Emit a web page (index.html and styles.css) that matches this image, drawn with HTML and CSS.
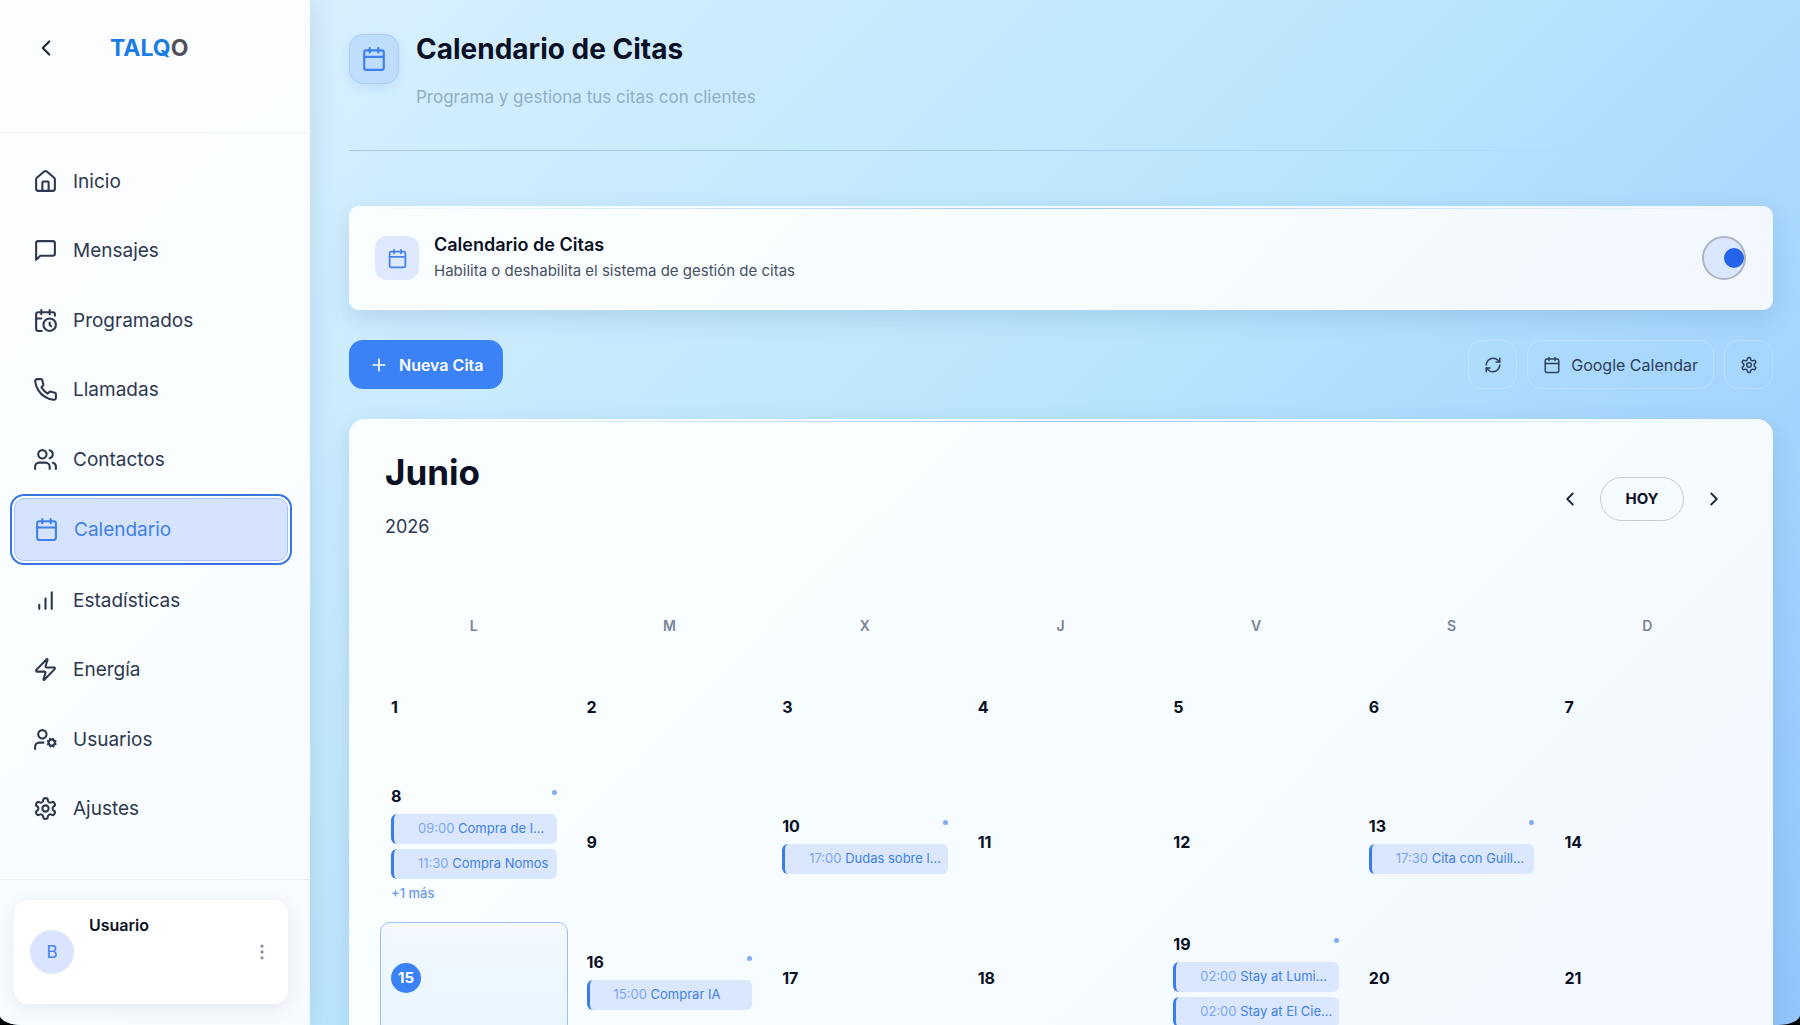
FILE: index.html
```html
<!DOCTYPE html>
<html lang="es">
<head>
  <meta charset="UTF-8" />
  <meta name="viewport" content="width=device-width, initial-scale=1.0" />
  <title>Calendario de Citas</title>
  <link rel="stylesheet" href="styles.css">
</head>
<body>
  <!-- icon sprite -->
  <svg class="sprite" aria-hidden="true">
    <symbol id="i-left" viewBox="0 0 24 24"><path d="m15 18-6-6 6-6"/></symbol>
    <symbol id="i-right" viewBox="0 0 24 24"><path d="m9 18 6-6-6-6"/></symbol>
    <symbol id="i-plus" viewBox="0 0 24 24"><path d="M5 12h14M12 5v14"/></symbol>
    <symbol id="i-home" viewBox="0 0 24 24"><path d="M15 21v-8a1 1 0 0 0-1-1h-4a1 1 0 0 0-1 1v8"/><path d="M3 10a2 2 0 0 1 .709-1.528l7-6a2 2 0 0 1 2.582 0l7 6A2 2 0 0 1 21 10v9a2 2 0 0 1-2 2H5a2 2 0 0 1-2-2z"/></symbol>
    <symbol id="i-message" viewBox="0 0 24 24"><path d="M21 15a2 2 0 0 1-2 2H7l-4 4V5a2 2 0 0 1 2-2h14a2 2 0 0 1 2 2z"/></symbol>
    <symbol id="i-clock" viewBox="0 0 24 24"><path d="M21 7.500V6a2 2 0 0 0-2-2H5a2 2 0 0 0-2 2v14a2 2 0 0 0 2 2h3.500"/><path d="M16 2v4M8 2v4M3 10h5M17.500 17.500 16 16.300V14"/><circle cx="16" cy="16" r="6"/></symbol>
    <symbol id="i-phone" viewBox="0 0 24 24"><path d="M22 16.920v3a2 2 0 0 1-2.180 2 19.790 19.790 0 0 1-8.630-3.070 19.500 19.500 0 0 1-6-6 19.790 19.790 0 0 1-3.070-8.670A2 2 0 0 1 4.110 2h3a2 2 0 0 1 2 1.720 12.840 12.840 0 0 0 .7 2.810 2 2 0 0 1-.45 2.110L8.090 9.910a16 16 0 0 0 6 6l1.270-1.270a2 2 0 0 1 2.110-.45 12.840 12.840 0 0 0 2.810.7A2 2 0 0 1 22 16.920z"/></symbol>
    <symbol id="i-users" viewBox="0 0 24 24"><path d="M16 21v-2a4 4 0 0 0-4-4H6a4 4 0 0 0-4 4v2"/><circle cx="9" cy="7" r="4"/><path d="M22 21v-2a4 4 0 0 0-3-3.870M16 3.130a4 4 0 0 1 0 7.750"/></symbol>
    <symbol id="i-calendar" viewBox="0 0 24 24"><path d="M8 2v4M16 2v4M3 10h18"/><rect width="18" height="18" x="3" y="4" rx="2"/></symbol>
    <symbol id="i-chart" viewBox="0 0 24 24"><path d="M12 20V10M18 20V4M6 20v-4"/></symbol>
    <symbol id="i-zap" viewBox="0 0 24 24"><path d="M4 14a1 1 0 0 1-.78-1.630l9.900-10.200a.5.5 0 0 1 .86.460l-1.920 6.020A1 1 0 0 0 13 10h7a1 1 0 0 1 .78 1.630l-9.900 10.200a.5.5 0 0 1-.86-.460l1.920-6.020A1 1 0 0 0 11 14z"/></symbol>
    <symbol id="i-user-cog" viewBox="0 0 24 24"><circle cx="9" cy="7" r="4"/><path d="M10 15H6a4 4 0 0 0-4 4v2"/><circle cx="18" cy="15" r="3"/><path d="m21.700 16.400-.9-.3M15.200 13.900l-.9-.3M16.600 18.700l.3-.9M19.100 12.200l.3-.9M19.600 18.700l-.4-1M16.800 12.300l-.4-1M14.300 16.600l1-.4M20.700 13.800l1-.4"/></symbol>
    <symbol id="i-gear" viewBox="0 0 24 24"><path d="M12.220 2h-.44a2 2 0 0 0-2 2v.18a2 2 0 0 1-1 1.730l-.43.25a2 2 0 0 1-2 0l-.15-.08a2 2 0 0 0-2.730.730l-.22.380a2 2 0 0 0 .730 2.730l.150.100a2 2 0 0 1 1 1.720v.510a2 2 0 0 1-1 1.740l-.150.090a2 2 0 0 0-.730 2.730l.220.380a2 2 0 0 0 2.730.730l.150-.080a2 2 0 0 1 2 0l.430.250a2 2 0 0 1 1 1.730V20a2 2 0 0 0 2 2h.440a2 2 0 0 0 2-2v-.180a2 2 0 0 1 1-1.730l.430-.250a2 2 0 0 1 2 0l.150.080a2 2 0 0 0 2.730-.730l.220-.390a2 2 0 0 0-.730-2.730l-.150-.080a2 2 0 0 1-1-1.740v-.500a2 2 0 0 1 1-1.740l.150-.090a2 2 0 0 0 .730-2.730l-.220-.380a2 2 0 0 0-2.730-.730l-.150.080a2 2 0 0 1-2 0l-.430-.250a2 2 0 0 1-1-1.730V4a2 2 0 0 0-2-2z"/><circle cx="12" cy="12" r="3"/></symbol>
    <symbol id="i-refresh" viewBox="0 0 24 24"><path d="M3 12a9 9 0 0 1 9-9 9.750 9.750 0 0 1 6.740 2.740L21 8"/><path d="M21 3v5h-5M21 12a9 9 0 0 1-9 9 9.750 9.750 0 0 1-6.740-2.740L3 16"/><path d="M8 16H3v5"/></symbol>
    <symbol id="i-dots" viewBox="0 0 24 24"><circle cx="12" cy="12" r="1"/><circle cx="12" cy="5" r="1"/><circle cx="12" cy="19" r="1"/></symbol>
  </svg>

  <div class="app">
    <aside class="sidebar">
      <div class="brand">
        <button class="icon-btn" aria-label="Contraer menú"><svg class="icon"><use href="#i-left"/></svg></button>
        <a class="logo" href="#">TALQ<span>O</span></a>
      </div>

      <nav class="menu">
        <a href="#"><svg class="icon"><use href="#i-home"/></svg>Inicio</a>
        <a href="#"><svg class="icon"><use href="#i-message"/></svg>Mensajes</a>
        <a href="#"><svg class="icon"><use href="#i-clock"/></svg>Programados</a>
        <a href="#"><svg class="icon"><use href="#i-phone"/></svg>Llamadas</a>
        <a href="#"><svg class="icon"><use href="#i-users"/></svg>Contactos</a>
        <a href="#" class="active" aria-current="page"><svg class="icon"><use href="#i-calendar"/></svg>Calendario</a>
        <a href="#"><svg class="icon"><use href="#i-chart"/></svg>Estadísticas</a>
        <a href="#"><svg class="icon"><use href="#i-zap"/></svg>Energía</a>
        <a href="#"><svg class="icon"><use href="#i-user-cog"/></svg>Usuarios</a>
        <a href="#"><svg class="icon"><use href="#i-gear"/></svg>Ajustes</a>
      </nav>

      <div class="sidebar-footer">
        <div class="user-card">
          <span class="avatar">B</span>
          <span class="user-name">Usuario</span>
          <button class="icon-btn more" aria-label="Opciones de usuario"><svg class="icon"><use href="#i-dots"/></svg></button>
        </div>
      </div>
    </aside>

    <main class="content">
      <header class="page-header">
        <span class="header-icon"><svg class="icon"><use href="#i-calendar"/></svg></span>
        <div>
          <h1>Calendario de Citas</h1>
          <p>Programa y gestiona tus citas con clientes</p>
        </div>
      </header>

      <section class="card toggle-card">
        <span class="card-icon"><svg class="icon"><use href="#i-calendar"/></svg></span>
        <label for="enable-calendar">
          <strong>Calendario de Citas</strong>
          <span>Habilita o deshabilita el sistema de gestión de citas</span>
        </label>
        <input type="checkbox" class="switch" id="enable-calendar" checked />
      </section>

      <div class="toolbar">
        <button class="btn-primary"><svg class="icon"><use href="#i-plus"/></svg>Nueva Cita</button>
        <div class="tools">
          <button class="btn-glass square" aria-label="Actualizar"><svg class="icon"><use href="#i-refresh"/></svg></button>
          <button class="btn-glass"><svg class="icon"><use href="#i-calendar"/></svg>Google Calendar</button>
          <button class="btn-glass square" aria-label="Configuración"><svg class="icon"><use href="#i-gear"/></svg></button>
        </div>
      </div>

      <section class="card calendar">
        <div class="calendar-header">
          <div>
            <h2>Junio</h2>
            <p>2026</p>
          </div>
          <div class="month-nav">
            <button class="icon-btn" aria-label="Mes anterior"><svg class="icon"><use href="#i-left"/></svg></button>
            <button class="today-btn">HOY</button>
            <button class="icon-btn" aria-label="Mes siguiente"><svg class="icon"><use href="#i-right"/></svg></button>
          </div>
        </div>

        <table class="month">
          <thead>
            <tr><th>L</th><th>M</th><th>X</th><th>J</th><th>V</th><th>S</th><th>D</th></tr>
          </thead>
          <tbody>
            <tr>
              <td><span class="num">1</span></td>
              <td><span class="num">2</span></td>
              <td><span class="num">3</span></td>
              <td><span class="num">4</span></td>
              <td><span class="num">5</span></td>
              <td><span class="num">6</span></td>
              <td><span class="num">7</span></td>
            </tr>
            <tr class="busy">
              <td>
                <div class="day-top"><span class="num">8</span><i class="dot"></i></div>
                <a class="event" href="#"><time>09:00</time> Compra de l...</a>
                <a class="event" href="#"><time>11:30</time> Compra Nomos</a>
                <a class="more-events" href="#">+1 más</a>
              </td>
              <td><span class="num">9</span></td>
              <td>
                <div class="day-top"><span class="num">10</span><i class="dot"></i></div>
                <a class="event" href="#"><time>17:00</time> Dudas sobre l...</a>
              </td>
              <td><span class="num">11</span></td>
              <td><span class="num">12</span></td>
              <td>
                <div class="day-top"><span class="num">13</span><i class="dot"></i></div>
                <a class="event" href="#"><time>17:30</time> Cita con Guill...</a>
              </td>
              <td><span class="num">14</span></td>
            </tr>
            <tr>
              <td class="today"><span class="num">15</span></td>
              <td>
                <div class="day-top"><span class="num">16</span><i class="dot"></i></div>
                <a class="event" href="#"><time>15:00</time> Comprar IA</a>
              </td>
              <td><span class="num">17</span></td>
              <td><span class="num">18</span></td>
              <td>
                <div class="day-top"><span class="num">19</span><i class="dot"></i></div>
                <a class="event" href="#"><time>02:00</time> Stay at Lumi...</a>
                <a class="event" href="#"><time>02:00</time> Stay at El Cie...</a>
              </td>
              <td><span class="num">20</span></td>
              <td><span class="num">21</span></td>
            </tr>
          </tbody>
        </table>
      </section>
    </main>
  </div>
</body>
</html>
```
FILE: styles.css
```css
* {
  box-sizing: border-box;
}

body {
  margin: 0;
  background: #000;
  font-family: Inter, "Open Sans", sans-serif;
  color: #0b1024;
}

h1, h2, p {
  margin: 0;
}

a {
  color: inherit;
  text-decoration: none;
}

button {
  font-family: inherit;
  border: none;
  background: none;
  padding: 0;
  cursor: pointer;
}

.sprite {
  display: none;
}

.icon {
  width: 18px;
  height: 18px;
  flex: none;
  display: block;
  fill: none;
  stroke: currentColor;
  stroke-width: 2;
  stroke-linecap: round;
  stroke-linejoin: round;
}

.icon-btn {
  display: flex;
  align-items: center;
  justify-content: center;
  width: 44px;
  height: 44px;
  color: #1e293b;
}

.app {
  display: flex;
  height: 100vh;
  overflow: hidden;
  background: linear-gradient(135deg, #e0f2fe 0%, #bae6fd 50%, #93c5fd 100%);
  border-radius: 0 0 22px 22px / 0 0 10px 10px;
}

/* Sidebar */
.sidebar {
  width: 310px;
  flex: none;
  display: flex;
  flex-direction: column;
  background: linear-gradient(135deg, #fcfdff 0%, #fafeff 50%, #f7faff 100%);
  box-shadow: 4px 0 24px rgba(30, 80, 140, 0.12);
}

.brand {
  display: flex;
  align-items: flex-start;
  gap: 42px;
  height: 133px;
  padding: 26px 24px;
  border-bottom: 1px solid #eef4f9;
}

.brand .icon {
  width: 26px;
  height: 26px;
}

.logo {
  font-size: 23px;
  font-weight: 700;
  line-height: 44px;
  color: #1a7ce6;
}

.logo span {
  color: #505157;
}

.menu {
  flex: 1;
  display: flex;
  flex-direction: column;
  justify-content: space-between;
  padding: 18px 22px 40px 14px;
}

.menu a {
  display: flex;
  align-items: center;
  gap: 15px;
  height: 61px;
  padding: 0 19px;
  border-radius: 10px;
  font-size: 19px;
  color: #2d3850;
}

.menu .icon {
  width: 25px;
  height: 25px;
}

.menu .active {
  height: 63px;
  color: #3f80ea;
  background: #d5e3fe;
  border: 1px solid #a5c3f9;
  outline: 2px solid #3775e2;
  outline-offset: 2px;
}

.sidebar-footer {
  padding: 20px 22px 21px 14px;
  border-top: 1px solid #e8f0f6;
}

.user-card {
  display: flex;
  align-items: center;
  gap: 15px;
  height: 104px;
  padding: 16px 4px 16px 16px;
  background: #fff;
  border-radius: 14px;
  box-shadow: 0 4px 20px rgba(15, 23, 42, 0.08);
}

.avatar {
  display: flex;
  align-items: center;
  justify-content: center;
  width: 44px;
  height: 44px;
  border-radius: 50%;
  background: #dae4fe;
  color: #4583ea;
  font-size: 17px;
}

.user-name {
  flex: 1;
  align-self: flex-start;
  font-size: 16px;
  font-weight: 600;
  line-height: 18px;
}

.more {
  color: #8a94a8;
}

.more .icon {
  width: 20px;
  height: 20px;
}

/* Main column */
.content {
  flex: 1;
  min-width: 0;
  padding: 34px 27px 0 39px;
}

.page-header {
  display: flex;
  gap: 17px;
  height: 117px;
  margin-bottom: 55px;
  border-bottom: 1px solid;
  border-image: linear-gradient(90deg, #a3c9f5 0%, #a3cdf8 50%, rgba(163, 205, 248, 0) 90%) 1;
}

.header-icon {
  display: flex;
  align-items: center;
  justify-content: center;
  width: 50px;
  height: 50px;
  border: 1px solid #a9ccfa;
  border-radius: 14px;
  background: #bfdefd;
  color: #3f80f0;
  box-shadow: 0 4px 10px rgba(59, 130, 246, 0.12);
}

.header-icon .icon {
  width: 26px;
  height: 26px;
}

.page-header h1 {
  font-size: 28px;
  font-weight: 700;
  line-height: 30px;
}

.page-header p {
  margin-top: 20px;
  font-size: 17px;
  line-height: 26px;
  color: #8fafc6;
}

.card {
  background: linear-gradient(135deg, #fbfeff 0%, #f7fdff 45%, #f3f7ff 100%);
  box-shadow: 0 8px 24px rgba(20, 70, 120, 0.14);
}

/* thin blue highlight along the top edge */
.card::before {
  content: "";
  position: absolute;
  top: 2px;
  left: 0;
  right: 0;
  height: 1px;
  background: linear-gradient(90deg, transparent, #a3c8f5, transparent);
}

.toggle-card {
  position: relative;
  display: flex;
  align-items: center;
  gap: 15px;
  height: 104px;
  padding: 0 27px 0 26px;
  border-radius: 10px;
}

.card-icon {
  display: flex;
  align-items: center;
  justify-content: center;
  width: 44px;
  height: 44px;
  border-radius: 12px;
  background: #dee8fe;
  color: #4583ea;
}

.card-icon .icon {
  width: 21px;
  height: 21px;
}

.toggle-card label {
  flex: 1;
  display: flex;
  flex-direction: column;
}

.toggle-card strong {
  font-size: 18px;
  font-weight: 600;
  line-height: 26px;
}

.toggle-card label span {
  font-size: 15px;
  line-height: 26px;
  color: #475062;
}

.switch {
  appearance: none;
  display: flex;
  align-items: center;
  justify-content: flex-end;
  width: 44px;
  height: 44px;
  margin: 0;
  border: 2px solid #adb5c4;
  border-radius: 50%;
  background: #dbe7fe;
  cursor: pointer;
}

.switch::before {
  content: "";
  width: 20px;
  height: 20px;
  border-radius: 50%;
  background: #2563eb;
}

.switch:not(:checked) {
  justify-content: flex-start;
}

.toolbar {
  display: flex;
  justify-content: space-between;
  margin: 30px 0;
}

.btn-primary {
  display: flex;
  align-items: center;
  gap: 10px;
  height: 49px;
  padding: 0 20px;
  border-radius: 14px;
  background: #3b82f6;
  color: #fff;
  font-size: 16px;
  font-weight: 600;
}

.btn-primary .icon {
  width: 20px;
  height: 20px;
}

.tools {
  display: flex;
  gap: 10px;
}

.btn-glass {
  display: flex;
  align-items: center;
  justify-content: center;
  gap: 10px;
  height: 49px;
  padding: 0 15px;
  border: 1px solid rgba(255, 255, 255, 0.2);
  border-radius: 14px;
  color: #2c405c;
  font-size: 16px;
}

.square {
  width: 49px;
}

/* Calendar */
.calendar {
  position: relative;
  padding: 34px 24px 34px 23px;
  border-radius: 16px;
}

.calendar-header {
  display: flex;
  justify-content: space-between;
  align-items: center;
  height: 91px;
  padding: 0 13px;
}

.calendar-header h2 {
  font-size: 35px;
  font-weight: 700;
  line-height: 36px;
}

.calendar-header p {
  margin-top: 24px;
  padding-bottom: 4px;
  font-size: 18px;
  line-height: 26px;
  color: #2d3850;
}

.month-nav {
  display: flex;
  align-items: center;
  gap: 8px;
}

.month-nav .icon {
  width: 22px;
  height: 22px;
}

.today-btn {
  width: 84px;
  height: 44px;
  border: 1px solid #c6ccd8;
  border-radius: 22px;
  color: #0b1024;
  font-size: 15px;
  font-weight: 700;
}

.month {
  width: 100%;
  margin-top: 56px;
  table-layout: fixed;
  border-spacing: 8px;
}

.month th {
  height: 35px;
  padding: 0;
  font-size: 14px;
  font-weight: 600;
  color: #7b8494;
}

.month td {
  height: 111px;
  padding: 7px 11px;
  vertical-align: middle;
  border-radius: 10px;
}

.month .busy td {
  height: 144px;
}

.num {
  display: block;
  font-size: 16px;
  font-weight: 700;
  line-height: 30px;
}

.day-top {
  display: flex;
  justify-content: space-between;
  margin-bottom: 3px;
}

.dot {
  width: 5px;
  height: 5px;
  margin-top: 9px;
  border-radius: 50%;
  background: #82abf3;
}

.event {
  display: block;
  height: 30px;
  padding: 0 4px 0 24px;
  border-left: 3px solid #3b7de8;
  border-radius: 6px;
  background: #dbe7fe;
  color: #4080ea;
  font-size: 13px;
  line-height: 28px;
  white-space: nowrap;
  overflow: hidden;
}

.event + .event {
  margin-top: 5px;
}

.event time {
  color: #7ba6f2;
}

.more-events {
  display: block;
  margin-top: 4px;
  font-size: 13px;
  font-weight: 500;
  line-height: 20px;
  color: #6b99ee;
}

.month .today {
  padding: 6px 10px;
  border: 1px solid #9dbdf8;
  background: linear-gradient(180deg, #f3f9ff, #e8f5fe);
}

.today .num {
  width: 30px;
  border-radius: 50%;
  background: #3b82f6;
  color: #fff;
  font-size: 15px;
  text-align: center;
}
```
